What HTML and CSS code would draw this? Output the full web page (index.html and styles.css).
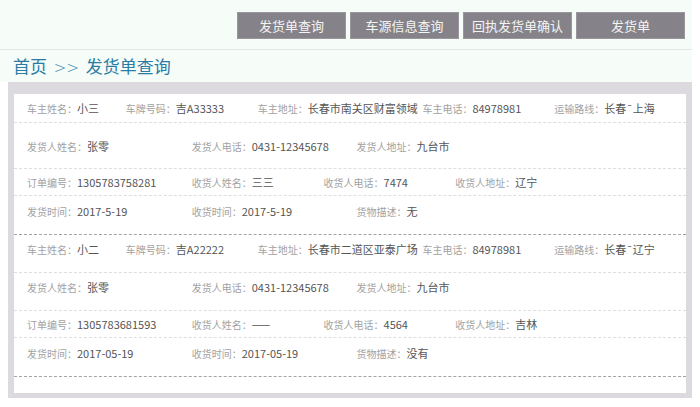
FILE: index.html
```html
<!DOCTYPE html>
<html lang="zh-CN">
<head>
    <meta charset="UTF-8">
    <meta name="viewport" content="width=device-width, initial-scale=1.0">
    <title>发货单查询</title>
    <link rel="stylesheet" href="styles.css">
</head>
<body>
    <div class="page">
        <div class="topbar">
            <a class="nav-btn">发货单查询</a>
            <a class="nav-btn">车源信息查询</a>
            <a class="nav-btn">回执发货单确认</a>
            <a class="nav-btn">发货单</a>
        </div>
        <div class="crumbs">首页 <span class="crumbs-sep">&gt;&gt;</span> 发货单查询</div>
    </div>

    <div class="frame">
        <div class="panel">
            <div class="order">
                <div class="row row--tight">
                    <div class="item span3"><span class="label">车主姓名：</span><span class="value">小三</span></div>
                    <div class="item span4"><span class="label">车牌号码：</span><span class="value">吉A33333</span></div>
                    <div class="item span5"><span class="label">车主地址：</span><span class="value">长春市南关区财富领域</span></div>
                    <div class="item span4"><span class="label">车主电话：</span><span class="value">84978981</span></div>
                    <div class="item span4"><span class="label">运输路线：</span><span class="value">长春¯上海</span></div>
                </div>
                <div class="row row--loose">
                    <div class="item span5"><span class="label">发货人姓名：</span><span class="value">张零</span></div>
                    <div class="item span5"><span class="label">发货人电话：</span><span class="value">0431-12345678</span></div>
                    <div class="item span10"><span class="label">发货人地址：</span><span class="value">九台市</span></div>
                </div>
                <div class="row row--short">
                    <div class="item span5"><span class="label">订单编号：</span><span class="value">1305783758281</span></div>
                    <div class="item span4"><span class="label">收货人姓名：</span><span class="value">三三</span></div>
                    <div class="item span4"><span class="label">收货人电话：</span><span class="value">7474</span></div>
                    <div class="item span7"><span class="label">收货人地址：</span><span class="value">辽宁</span></div>
                </div>
                <div class="row row--last">
                    <div class="item span5"><span class="label">发货时间：</span><span class="value">2017-5-19</span></div>
                    <div class="item span5"><span class="label">收货时间：</span><span class="value">2017-5-19</span></div>
                    <div class="item span10"><span class="label">货物描述：</span><span class="value">无</span></div>
                </div>
            </div>

            <div class="order">
                <div class="row">
                    <div class="item span3"><span class="label">车主姓名：</span><span class="value">小二</span></div>
                    <div class="item span4"><span class="label">车牌号码：</span><span class="value">吉A22222</span></div>
                    <div class="item span5"><span class="label">车主地址：</span><span class="value">长春市二道区亚泰广场</span></div>
                    <div class="item span4"><span class="label">车主电话：</span><span class="value">84978981</span></div>
                    <div class="item span4"><span class="label">运输路线：</span><span class="value">长春¯辽宁</span></div>
                </div>
                <div class="row">
                    <div class="item span5"><span class="label">发货人姓名：</span><span class="value">张零</span></div>
                    <div class="item span5"><span class="label">发货人电话：</span><span class="value">0431-12345678</span></div>
                    <div class="item span10"><span class="label">发货人地址：</span><span class="value">九台市</span></div>
                </div>
                <div class="row row--short">
                    <div class="item span5"><span class="label">订单编号：</span><span class="value">1305783681593</span></div>
                    <div class="item span4"><span class="label">收货人姓名：</span><span class="value">——</span></div>
                    <div class="item span4"><span class="label">收货人电话：</span><span class="value">4564</span></div>
                    <div class="item span7"><span class="label">收货人地址：</span><span class="value">吉林</span></div>
                </div>
                <div class="row row--last">
                    <div class="item span5"><span class="label">发货时间：</span><span class="value">2017-05-19</span></div>
                    <div class="item span5"><span class="label">收货时间：</span><span class="value">2017-05-19</span></div>
                    <div class="item span10"><span class="label">货物描述：</span><span class="value">没有</span></div>
                </div>
            </div>
        </div>
    </div>
</body>
</html>
```

FILE: styles.css
```css
*,
*::after,
*::before {
  box-sizing: border-box;
  margin: 0;
  padding: 0;
}

body {
  font-family: "Noto Sans CJK SC", "Noto Sans", sans-serif;
  background: #fff;
  width: 700px;
  overflow: hidden;
}

.page {
  width: 692px;
  background: #f6fdf8;
}

.topbar {
  display: flex;
  justify-content: flex-end;
  gap: 4px;
  height: 50px;
  padding: 12px 7px 0 0;
  border-bottom: 1px solid #e3e8e5;
}

.nav-btn {
  display: block;
  width: 109px;
  height: 27px;
  line-height: 26px;
  background: #858389;
  border: 1px solid #99979c;
  color: #f4f4f4;
  font-size: 13px;
  text-align: center;
  text-decoration: none;
}

.crumbs {
  height: 32px;
  line-height: 32px;
  padding-left: 13px;
  color: #2a7ca6;
  font-size: 17px;
  word-spacing: 3px;
}

.crumbs-sep {
  font-family: "DejaVu Sans", sans-serif;
  font-size: 15px;
  font-weight: 300;
}

.frame {
  width: 684px;
  margin-left: 8px;
  background: #dcd9df;
  padding: 12px 6px 5px 6px;
}

.panel {
  background: #fff;
  padding-bottom: 16px;
}

.order {
  border-bottom: 1px dashed #a4a4a4;
}

/* 20 columns of ~33px, items span 3-10 of them */
.row {
  display: grid;
  grid-template-columns: repeat(20, 1fr);
  padding: 5px 0 14px 13px;
  border-bottom: 1px dashed #dedede;
  white-space: nowrap;
}

.row--tight {
  padding-top: 5px;
  padding-bottom: 5px;
}

.row--loose {
  padding-top: 14px;
  padding-bottom: 13px;
}

.row--short {
  padding-top: 4px;
  padding-bottom: 4px;
}

.row--last {
  padding-top: 6px;
  border-bottom: none;
}

.item {
  display: flex;
  align-items: baseline;
  height: 18px;
  line-height: 18px;
}

.span3 { grid-column: span 3; }
.span4 { grid-column: span 4; }
.span5 { grid-column: span 5; }
.span7 { grid-column: span 7; }
.span10 { grid-column: span 10; }

.label {
  font-size: 10px;
  color: #a2a2a2;
}

.value {
  font-size: 11px;
  color: #555;
}
```
